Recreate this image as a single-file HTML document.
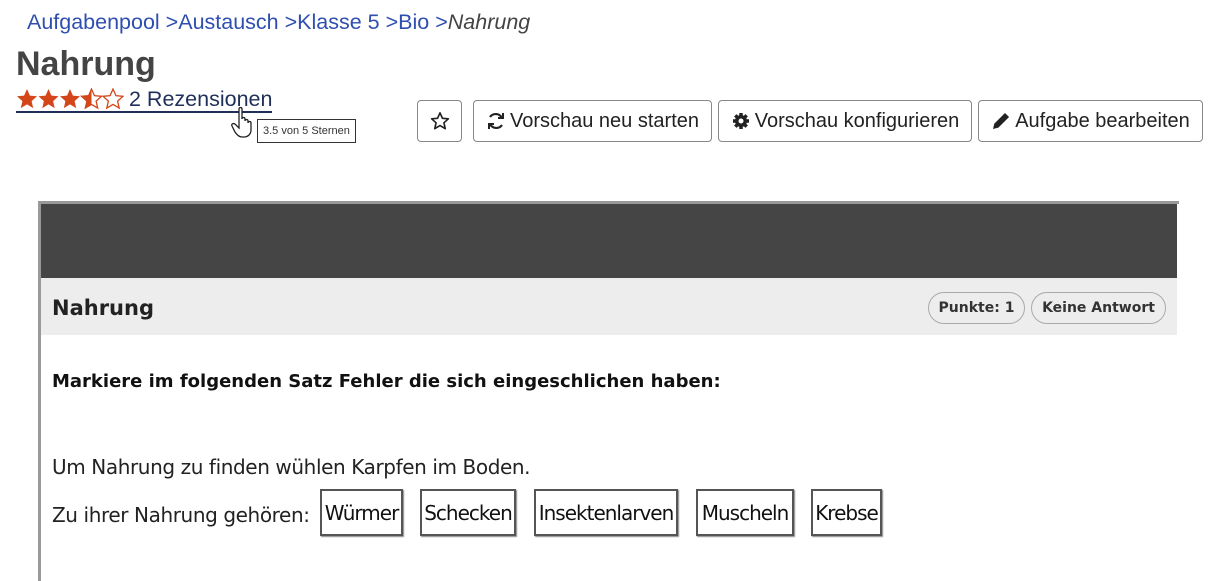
<!DOCTYPE html>
<html><head><meta charset="utf-8"><style>
body{margin:0;width:1219px;height:568px;overflow:hidden;background:#fff;font-family:"Liberation Sans",sans-serif;position:relative}
.a{position:absolute}
.bc{left:27px;top:10px;font-size:21.5px;color:#2f4fb0;white-space:nowrap}
.bc i{color:#444}
h1{position:absolute;left:16px;top:45px;margin:0;font-size:34px;font-weight:bold;color:#444}
.rev{left:16px;top:87px;font-size:21.5px;color:#1f2f5a;border-bottom:2px solid #1f2f5a;line-height:24px;padding-bottom:0;white-space:nowrap;display:flex;align-items:center;gap:5px}
.tip{left:257px;top:119px;border:1px solid #333;font-size:11px;padding:5px 5px;color:#333;background:#fff}
.btn{position:absolute;top:100px;height:42px;border:1px solid #888;border-radius:4px;box-sizing:border-box;font-size:20px;color:#222;display:flex;align-items:center;justify-content:center;gap:4px;font-family:"Liberation Sans",sans-serif}
.panel{left:38px;top:201px;width:1141px;height:380px;border-left:3px solid #999;border-top:3px solid #999;box-sizing:border-box}
.dark{left:41px;top:204px;width:1136px;height:74px;background:#454545}
.hd{left:41px;top:278px;width:1136px;height:57px;background:#ededed}
.f{font-family:"DejaVu Sans","Liberation Sans",sans-serif}
.pill{position:absolute;top:292px;height:32px;border:1px solid #aaa;border-radius:16px;box-sizing:border-box;font-size:14px;font-weight:bold;color:#333;display:flex;align-items:center;justify-content:center}
.w{position:absolute;top:489px;height:47px;border:2px solid #555;box-sizing:border-box;box-shadow:1px 1px 1px #888;font-size:20px;display:flex;align-items:center;justify-content:center;color:#111;letter-spacing:-1px;white-space:nowrap}
</style></head><body>
<div class="a bc">Aufgabenpool &gt;Austausch &gt;Klasse 5 &gt;Bio &gt;<i>Nahrung</i></div>
<h1>Nahrung</h1>
<div class="a rev"><svg width="108" height="22" viewBox="0 0 108 22">
<defs><path id="s" d="M11 1l2.9 6.6 7.1.7-5.4 4.8 1.6 7-6.2-3.7-6.2 3.7 1.6-7L1 8.3l7.1-.7z"/><clipPath id="h"><rect x="0" y="0" width="11" height="22"/></clipPath></defs>
<use href="#s" fill="#d2461a"/><use href="#s" x="21.5" fill="#d2461a"/><use href="#s" x="43" fill="#d2461a"/>
<use href="#s" x="64.5" fill="none" stroke="#d2461a" stroke-width="1.3"/><g transform="translate(64.5 0)"><use href="#s" fill="#d2461a" clip-path="url(#h)"/></g>
<use href="#s" x="86" fill="none" stroke="#d2461a" stroke-width="1.3"/></svg><span>2 Rezensionen</span></div>
<svg class="a" style="left:230px;top:106px" width="28" height="34" viewBox="0 0 28 34"><path d="M9 3c0-2 3-2 3 0v10c0-2 3-2 3 0v2c0-2 3-2 3 0v2c0-2 3-2 3 0v7c0 4-3 7-7 7h-2c-3 0-5-2-7-5L2 20c-1-2 1-3 3-2l4 4z" fill="#fff" stroke="#222" stroke-width="1.3"/></svg>
<div class="a tip">3.5 von 5 Sternen</div>
<div class="btn" style="left:417px;width:45px"><svg width="20" height="20" viewBox="0 0 22 22"><path d="M11 2l2.7 6 6.5.6-4.9 4.4 1.5 6.4-5.8-3.4-5.8 3.4 1.5-6.4-4.9-4.4 6.5-.6z" fill="none" stroke="#222" stroke-width="1.8" stroke-linejoin="round"/></svg></div>
<div class="btn" style="left:473px;width:239px"><svg width="20" height="20" viewBox="0 0 20 20" fill="none" stroke="#222" stroke-width="2.2"><path d="M16 7A7 7 0 0 0 4 6M4 13a7 7 0 0 0 12 1"/><path d="M17 2v5h-5M3 18v-5h5" stroke-width="2"/></svg>Vorschau neu starten</div>
<div class="btn" style="left:718px;width:254px"><svg width="20" height="20" viewBox="0 0 20 20"><circle cx="10" cy="10" r="6" fill="#222"/><g stroke="#222" stroke-width="3.5"><path d="M10 2v16M2 10h16M4.3 4.3l11.4 11.4M15.7 4.3L4.3 15.7"/></g><circle cx="10" cy="10" r="2.5" fill="#fff"/></svg>Vorschau konfigurieren</div>
<div class="btn" style="left:978px;width:225px"><svg width="20" height="20" viewBox="0 0 20 20" fill="#222" stroke="#222" stroke-width="1.5"><path d="M3 17l1-4L14 3l3 3L7 16z"/></svg>Aufgabe bearbeiten</div>
<div class="a panel"></div>
<div class="a dark"></div>
<div class="a hd"></div>
<div class="a f" style="left:52px;top:296px;font-size:21px;font-weight:bold;color:#222">Nahrung</div>
<div class="pill f" style="left:928px;width:97px">Punkte: 1</div>
<div class="pill f" style="left:1031px;width:135px">Keine Antwort</div>
<div class="a f" style="left:52px;top:371px;font-size:18px;font-weight:bold;color:#111">Markiere im folgenden Satz Fehler die sich eingeschlichen haben:</div>
<div class="a f" style="left:52px;top:455px;font-size:20px;color:#222;letter-spacing:-0.4px">Um Nahrung zu finden wühlen Karpfen im Boden.</div>
<div class="a f" style="left:52px;top:503px;font-size:20px;color:#222;letter-spacing:-0.4px">Zu ihrer Nahrung gehören:</div>
<div class="w f" style="left:320px;width:83px">Würmer</div>
<div class="w f" style="left:420px;width:96px">Schecken</div>
<div class="w f" style="left:534px;width:144px">Insektenlarven</div>
<div class="w f" style="left:696px;width:98px">Muscheln</div>
<div class="w f" style="left:811px;width:71px">Krebse</div>
</body></html>
